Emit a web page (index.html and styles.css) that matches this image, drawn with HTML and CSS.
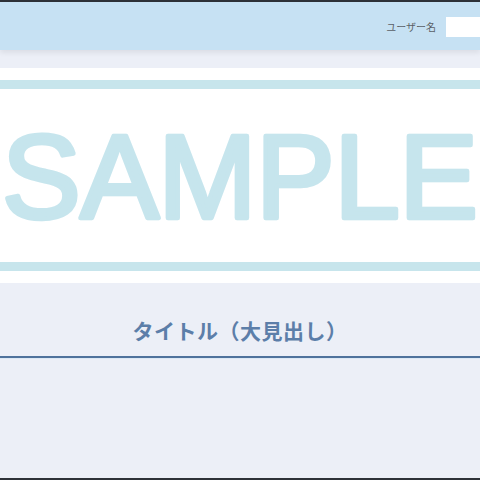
FILE: index.html
```html
<!DOCTYPE html>
<html lang="ja">
<head>
    <meta charset="UTF-8">
    <meta name="viewport" content="width=device-width, initial-scale=1.0">
    <title>タイトル</title>
    <link rel="stylesheet" href="styles.css">
</head>
<body>

    <div class="page">
        <header class="header">
            <label class="user-label" for="username">ユーザー名</label>
            <input class="user-input" id="username" type="text">
        </header>

        <div class="banner">
            <div class="stripe"></div>
            <svg class="banner-text" viewBox="0 0 480 173">
                <text x="240" y="129" text-anchor="middle" textLength="476">SAMPLE</text>
            </svg>
            <div class="stripe"></div>
        </div>

        <section class="content">
            <h1 class="title">タイトル（大見出し）</h1>
        </section>
    </div>

</body>
</html>
```

FILE: styles.css
```css
* {
    margin: 0;
    padding: 0;
    box-sizing: border-box;
}

body {
    font-family: "Noto Sans CJK JP", "Liberation Sans", sans-serif;
    background: #eceff7;
}

.page {
    min-height: 100vh;
    border-top: 2px solid #2d3137;
    border-bottom: 2px solid #2d3137;
    display: flex;
    flex-direction: column;
}

.header {
    height: 48px;
    background: #c6e1f3;
    display: flex;
    align-items: center;
    justify-content: flex-end;
    gap: 10px;
    box-shadow: 0 3px 5px rgba(0, 0, 0, 0.07);
    position: relative;
}

.user-label {
    font-size: 10px;
    color: #5a5f66;
}

.user-input {
    width: 34px;
    height: 20px;
    border: none;
    background: #fff;
    margin-top: 2px;
}

.banner {
    margin-top: 18px;
    background: #fff;
    padding: 12px 0;
    overflow: hidden;
}

.stripe {
    height: 9px;
    background: #c7e5ec;
}

.banner-text {
    display: block;
    width: 480px;
    height: 173px;
}

/* 丸みのある文字に見せるため、線を太めに重ねる */
.banner-text text {
    font-family: "Liberation Sans", sans-serif;
    font-size: 118px;
    fill: #c6e5ed;
    stroke: #c6e5ed;
    stroke-width: 4.5px;
    stroke-linejoin: round;
}

.content {
    padding-top: 33px;
}

.title {
    font-size: 21px;
    letter-spacing: 0.5px;
    font-weight: bold;
    color: #5c7ea9;
    text-align: center;
    line-height: 28px;
    padding-bottom: 12px;
    border-bottom: 2px solid #4f729c;
    box-shadow: 0 1px 0 #dbe8f5;
}
```
